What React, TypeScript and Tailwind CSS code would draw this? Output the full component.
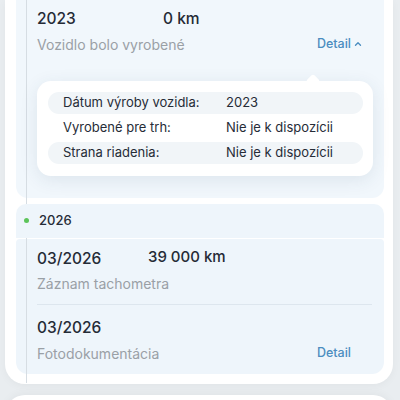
import { ChevronUp } from 'lucide-react';

const font = { fontFamily: 'Inter, "Noto Sans", sans-serif' };

export default function App() {
  const specs = [
    { label: 'Dátum výroby vozidla:', value: '2023', shaded: true },
    { label: 'Vyrobené pre trh:', value: 'Nie je k dispozícii', shaded: false },
    { label: 'Strana riadenia:', value: 'Nie je k dispozícii', shaded: true },
  ];

  return (
    <div className="w-[400px] h-[400px] overflow-hidden bg-[#e9edf0] px-[5px]" style={font}>
      {/* Timeline card */}
      <div className="relative bg-white rounded-b-[20px] pl-[11px] pr-[9px] pb-[10px] shadow-[0_2px_8px_rgba(0,0,0,0.04)] w-[388px]">
        <div className="absolute left-[21px] top-0 h-[383px] w-px bg-[#d6dde3]" />

        {/* Manufactured entry */}
        <div className="bg-[#f1f7fc] pt-[7px] pb-[22px] pl-[21px] pr-[11px] rounded-b-[12px]">
          <div className="flex items-center h-[24px] text-[15.5px] font-medium text-[#252b36]">
            <span className="w-[126px]">2023</span>
            <span>0 km</span>
          </div>
          <div className="flex items-center justify-between h-[20px] mt-[3px]">
            <span className="text-[14px] text-[#9aa0a6]">Vozidlo bolo vyrobené</span>
            <span className="flex items-center gap-[2px] text-[12.5px] font-medium text-[#4b8dc0] mr-[10px]">
              Detail
              <ChevronUp size={10} strokeWidth={3.2} />
            </span>
          </div>

          {/* Popover */}
          <div className="relative mt-[27px] bg-white rounded-[14px] shadow-[0_4px_18px_rgba(40,70,100,0.10)] pt-[11px] pb-[12px] pl-[11px] pr-[10px]">
            <div className="absolute -top-[5px] right-[55px] w-[10px] h-[10px] bg-white rotate-45 rounded-[2px]" />
            <div className="relative flex flex-col gap-[3px]">
              {specs.map((s) => (
                <div
                  key={s.label}
                  className={`flex items-center h-[22px] pl-[15px] rounded-full text-[13px] text-[#262c37] ${s.shaded ? 'bg-[#f1f5f8]' : ''}`}
                >
                  <span className="w-[163px]">{s.label}</span>
                  <span>{s.value}</span>
                </div>
              ))}
            </div>
          </div>
        </div>

        {/* 2026 header */}
        <div className="relative mt-[6px] bg-[#eef5fb] rounded-t-[10px] h-[34px] flex items-center pl-[23px]">
          <div className="absolute left-[8px] top-[14px] w-[5px] h-[5px] rounded-full bg-[#5cc45a]" />
          <span className="text-[13px] font-medium text-[#262c37]">2026</span>
        </div>

        {/* 2026 entries */}
        <div className="mt-[1px] bg-[#eef5fb] rounded-b-[12px] rounded-t-[4px] pl-[21px] pr-[12px] pt-[8px] pb-[11px]">
          <div className="flex items-center h-[24px] text-[15.5px] font-medium text-[#252b36]">
            <span className="w-[111px]">03/2026</span>
            <span className="-mt-[3px] text-[15px]">39 000 km</span>
          </div>
          <div className="h-[20px] flex items-center mt-[2px] text-[14px] text-[#9aa0a6]">Záznam tachometra</div>
          <div className="h-px bg-[#dde6ee] mt-[11px]" />
          <div className="flex items-center h-[24px] mt-[11px] text-[15.5px] font-medium text-[#252b36]">03/2026</div>
          <div className="flex items-center justify-between h-[20px] mt-[3px]">
            <span className="text-[14px] text-[#9aa0a6]">Fotodokumentácia</span>
            <span className="text-[12.5px] font-medium text-[#4b8dc0] mr-[21px]">Detail</span>
          </div>
        </div>
      </div>

      {/* Next card */}
      <div className="mt-[11px] bg-white rounded-t-[20px] h-[30px] w-[388px] shadow-[0_-2px_8px_rgba(0,0,0,0.04)]" />
    </div>
  );
}
